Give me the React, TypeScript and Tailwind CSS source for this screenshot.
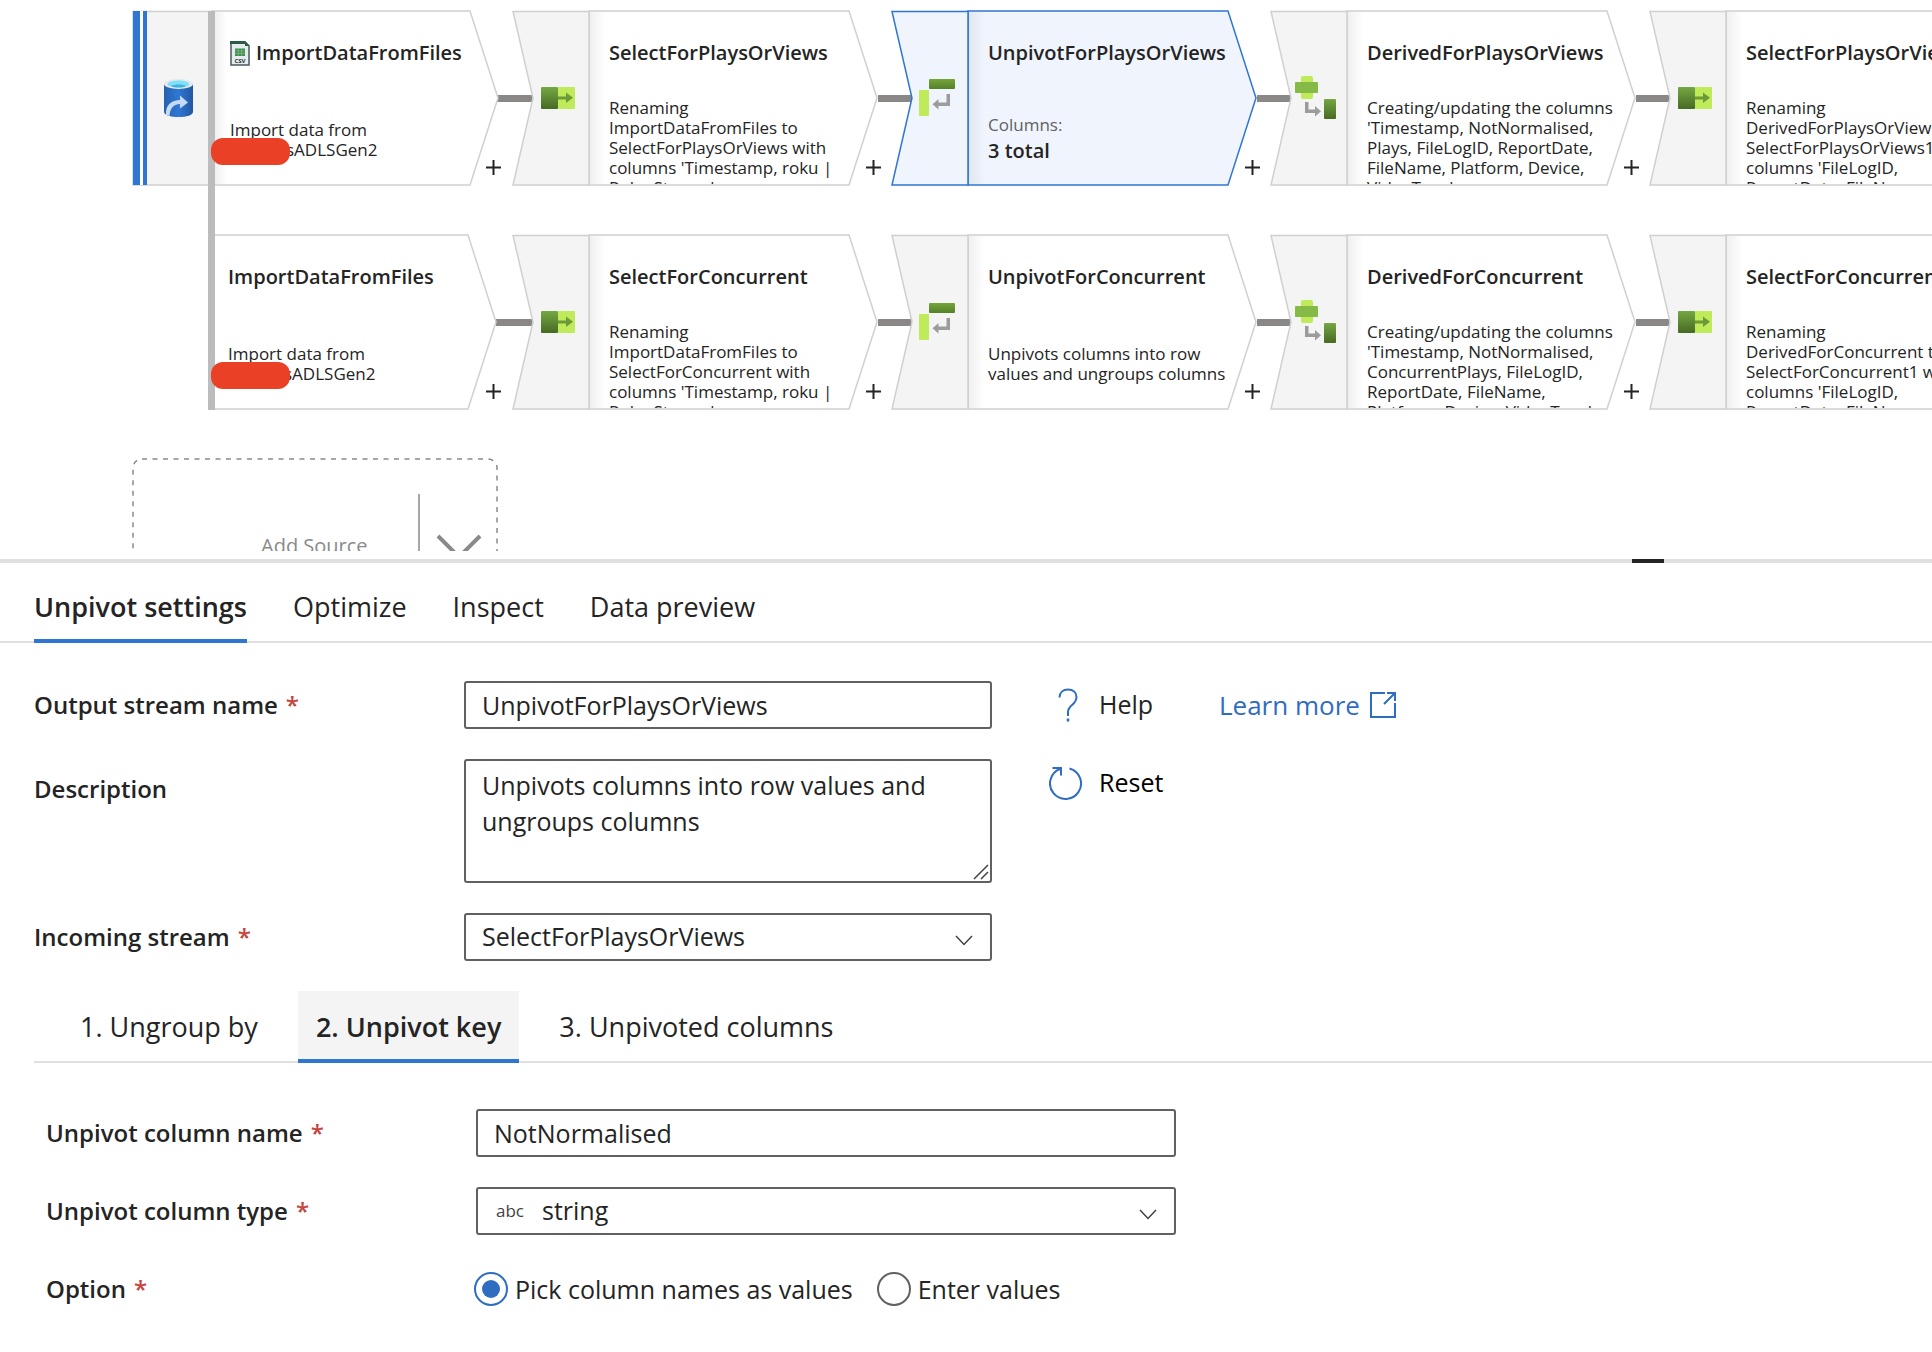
import { useState, type ReactNode } from 'react';

type Kind = 'select' | 'unpivot' | 'derive';

type StreamNode = {
  kind: Kind;
  title: string;
  lines?: string[];
  total?: number;
  selected?: boolean;
};

const playsNodes: StreamNode[] = [
  {
    kind: 'select',
    title: 'SelectForPlaysOrViews',
    lines: ['Renaming', 'ImportDataFromFiles to', 'SelectForPlaysOrViews with', "columns 'Timestamp, roku |", "Roku Stream'"],
  },
  { kind: 'unpivot', title: 'UnpivotForPlaysOrViews', total: 3, selected: true },
  {
    kind: 'derive',
    title: 'DerivedForPlaysOrViews',
    lines: ['Creating/updating the columns', "'Timestamp, NotNormalised,", 'Plays, FileLogID, ReportDate,', 'FileName, Platform, Device,', "VideoType'"],
  },
  {
    kind: 'select',
    title: 'SelectForPlaysOrViews1',
    lines: ['Renaming', 'DerivedForPlaysOrViews to', 'SelectForPlaysOrViews1 with', "columns 'FileLogID,", 'ReportDate, FileName,'],
  },
];

const concurrentNodes: StreamNode[] = [
  {
    kind: 'select',
    title: 'SelectForConcurrent',
    lines: ['Renaming', 'ImportDataFromFiles to', 'SelectForConcurrent with', "columns 'Timestamp, roku |", "Roku Stream'"],
  },
  {
    kind: 'unpivot',
    title: 'UnpivotForConcurrent',
    lines: ['Unpivots columns into row', 'values and ungroups columns'],
  },
  {
    kind: 'derive',
    title: 'DerivedForConcurrent',
    lines: ['Creating/updating the columns', "'Timestamp, NotNormalised,", 'ConcurrentPlays, FileLogID,', 'ReportDate, FileName,', "Platform, Device, VideoType'"],
  },
  {
    kind: 'select',
    title: 'SelectForConcurrent1',
    lines: ['Renaming', 'DerivedForConcurrent to', 'SelectForConcurrent1 with', "columns 'FileLogID,", 'ReportDate, FileName,'],
  },
];

const mainTabs = ['Unpivot settings', 'Optimize', 'Inspect', 'Data preview'];
const stepTabs = ['1. Ungroup by', '2. Unpivot key', '3. Unpivoted columns'];

const fieldClass =
  'w-full h-12 rounded-[3px] border-2 border-[#616161] bg-white px-4 text-[25px] text-[#242424] outline-none';

function Gradients() {
  return (
    <svg width="0" height="0" className="absolute">
      <defs>
        <linearGradient id="leaf" x1="0" y1="0" x2="0" y2="1">
          <stop offset="0" stopColor="#76a742" />
          <stop offset="1" stopColor="#466a23" />
        </linearGradient>
        <linearGradient id="bar" x1="0" y1="0" x2="0" y2="1">
          <stop offset="0" stopColor="#76a53a" />
          <stop offset="1" stopColor="#54812a" />
        </linearGradient>
        <linearGradient id="shade" x1="0" y1="0" x2="1" y2="0">
          <stop offset="0" stopColor="#000" stopOpacity="0.06" />
          <stop offset="1" stopColor="#000" stopOpacity="0" />
        </linearGradient>
        <linearGradient id="bucket" x1="0" y1="0" x2="1" y2="0">
          <stop offset="0" stopColor="#2660ae" />
          <stop offset="0.5" stopColor="#2f78d4" />
          <stop offset="1" stopColor="#2357a0" />
        </linearGradient>
      </defs>
    </svg>
  );
}

function KindIcon({ kind }: { kind: Kind }) {
  if (kind === 'select') {
    return (
      <g>
        <rect x="29" y="77" width="17" height="22" rx="1" fill="url(#leaf)" />
        <rect x="46" y="77" width="17" height="22" rx="1" fill="#bfea59" />
        <path d="M46 86.500h8v-4l7 5.200-7 5.200v-3.400h-8z" fill="#6b9a36" />
      </g>
    );
  }
  if (kind === 'unpivot') {
    return (
      <g>
        <rect x="38" y="69" width="26" height="10" rx="1" fill="url(#bar)" />
        <rect x="28" y="80" width="10" height="26" rx="1" fill="#bfea59" />
        <path d="M59 84h-3.500v8.500h-8v-3.500l-6 5.300 6 5.300v-3.500h11.500z" fill="#9c9c9c" />
      </g>
    );
  }
  return (
    <g>
      <rect x="31" y="66" width="12" height="23" rx="2" fill="#bfea59" />
      <rect x="25" y="72" width="23" height="11" rx="1" fill="#86ba46" />
      <path d="M35 92h3.500v7.500h6.500v-3.500l6 5.300-6 5.300v-3.500h-10z" fill="#9c9c9c" />
      <rect x="54" y="89" width="12" height="20" rx="1" fill="url(#leaf)" />
    </g>
  );
}

function PlusButton() {
  return (
    <button aria-label="Add transformation" className="absolute left-[352px] top-[148px] p-0.5">
      <svg width="15" height="15" viewBox="0 0 15 15" stroke="#242424" strokeWidth="2">
        <path d="M7.500 0v15M0 7.500h15" />
      </svg>
    </button>
  );
}

function TransformNode({ node }: { node: StreamNode }) {
  const stroke = node.selected ? '#2f76d2' : '#d0d0d0';
  const lines = node.lines || [];
  return (
    <div className="relative h-[176px] w-[379px] shrink-0">
      <svg width="402" height="176" viewBox="0 0 402 176" className="absolute left-0 top-0">
        <path d="M366 88.500H400" stroke="#8a8886" strokeWidth="7" />
        <path d="M77 1H337L365 88 337 175H77z" fill={node.selected ? '#f0f5fd' : '#fff'} stroke={stroke} strokeWidth="1.500" />
        <rect x="78" y="2" width="16" height="172" fill="url(#shade)" />
        <path d="M1 1.500H77V175H1L21 88z" fill={node.selected ? '#f0f5fd' : '#f4f4f4'} stroke={stroke} strokeWidth="1.500" />
        <KindIcon kind={node.kind} />
      </svg>
      <div className="relative h-[174px] overflow-hidden pl-[97px] pt-[29px] whitespace-nowrap">
        <h3 className="text-[20px] leading-7 font-semibold">{node.title}</h3>
        {node.total ? (
          <div className="pt-12">
            <p className="text-[17px] leading-5 text-[#616161]">Columns:</p>
            <p className="pt-0.5 text-[20px] leading-7 font-semibold">{node.total} total</p>
          </div>
        ) : (
          <div className={lines.length > 2 ? 'pt-[31px]' : 'pt-[53px]'}>
            {lines.map(line => (
              <p key={line} className="text-[17px] leading-5">{line}</p>
            ))}
          </div>
        )}
      </div>
      <PlusButton />
    </div>
  );
}

function CsvIcon() {
  return (
    <svg width="20" height="25" viewBox="0 0 20 25">
      <path d="M1 1h14l4 4v19H1z" fill="#e6ebee" stroke="#4a5962" strokeWidth="1.500" />
      <path d="M0 0h15l5 5h-5V3H0z" fill="#2d5a48" />
      <path d="M5 7.500h10v7.500H5z" fill="#3f8f50" />
      <path d="M5 10h10M5 12.500h10M8.300 7v8M11.600 7v8" stroke="#8fc096" strokeWidth="0.600" />
      <text x="10" y="22" textAnchor="middle" fontSize="6" fontWeight="700" fill="#26343c">CSV</text>
    </svg>
  );
}

function SourceNode({ primary = false }: { primary?: boolean }) {
  return (
    <div className="relative h-[176px] w-[380px] shrink-0">
      <svg width="402" height="176" viewBox="0 0 402 176" className="absolute left-0 top-0">
        <path d="M364 88.500H401" stroke="#8a8886" strokeWidth="7" />
        <path
          d={primary ? 'M80 1H338L366 88 338 175H80z' : 'M80 1H336L364 88 336 175H80z'}
          fill="#fff"
          stroke="#d0d0d0"
          strokeWidth="1.500"
        />
        {primary && (
          <g>
            <rect x="83" y="2" width="12" height="172" fill="url(#shade)" />
            <path d="M1 1.500H80V175H1z" fill="#f4f4f4" stroke="#d0d0d0" strokeWidth="1.500" />
            <path d="M8 1h3v174H8z" fill="#fff" />
            <path d="M1 1h7v174H1zM11 1h4v174H11z" fill="#2f76d2" />
            <path d="M32 74v28c0 3 6.500 5 14.500 5s14.500-2 14.500-5V74z" fill="url(#bucket)" />
            <ellipse cx="46.500" cy="74" rx="14.500" ry="5" fill="#e6e8ea" />
            <ellipse cx="46.500" cy="74" rx="11" ry="3.600" fill="#7fe0fb" />
            <path d="M39 76c3-2 12-2 15 0-3 2-12 2-15 0z" fill="#3fb4d6" />
            <path d="M34 105c-1-10 6-15 14-15v-4.500l8 7-8 6v-4.500c-6 0-10 4-10.500 12z" fill="#c5dbf3" />
          </g>
        )}
      </svg>
      <div className={`relative pt-[29px] whitespace-nowrap ${primary ? 'pl-[98px]' : 'pl-24'}`}>
        <h3 className="flex items-center gap-1.5 text-[20px] leading-7 font-semibold">
          {primary && <CsvIcon />}
          ImportDataFromFiles
        </h3>
        <p className="pt-[53px] text-[17px] leading-5">Import data from</p>
        <p className="pl-14 text-[17px] leading-5">sADLSGen2</p>
      </div>
      {primary && <div className="absolute left-[76px] top-px z-10 h-[399px] w-[7px] bg-[#bcbcbc]" />}
      <div className="absolute left-[79px] top-[128px] z-20 h-[27px] w-[79px] rounded-[12px] bg-[#ea4126]" />
      <PlusButton />
    </div>
  );
}

function AddSource() {
  return (
    <button className="relative flex h-[176px] w-[366px] shrink-0 items-center text-[20px] text-[#8a8a8a]">
      <svg width="366" height="176" viewBox="0 0 366 176" className="absolute left-0 top-0" fill="none" stroke="#8a8a8a">
        <rect x="1" y="1" width="364" height="174" rx="9" strokeWidth="1.500" strokeDasharray="5 5.500" />
        <path d="M287 36V140" strokeWidth="1.500" />
        <path d="M306 78l21 21 21-21" strokeWidth="4" />
      </svg>
      <span className="pl-[129px]">Add Source</span>
    </button>
  );
}

function Label({ htmlFor, required = true, children }: { htmlFor?: string; required?: boolean; children: ReactNode }) {
  return (
    <label htmlFor={htmlFor} className="flex w-[430px] shrink-0 items-center gap-2 text-[24px] leading-8 font-semibold">
      {children}
      {required && <span className="text-[#c4443e]">*</span>}
    </label>
  );
}

function Chevron() {
  return (
    <svg
      width="18"
      height="11"
      viewBox="0 0 18 11"
      fill="none"
      stroke="#424242"
      strokeWidth="1.500"
      className="pointer-events-none absolute right-[19px] top-[22px]"
    >
      <path d="M1 1l8 8.500L17 1" />
    </svg>
  );
}

export default function App() {
  const [mainTab, setMainTab] = useState(mainTabs[0]);
  const [step, setStep] = useState(stepTabs[1]);
  const [streamName, setStreamName] = useState('UnpivotForPlaysOrViews');
  const [description, setDescription] = useState('Unpivots columns into row values and ungroups columns');
  const [columnName, setColumnName] = useState('NotNormalised');
  const [option, setOption] = useState('pick');

  return (
    <div className="min-h-screen overflow-hidden bg-white font-['Open_Sans','Noto_Sans',sans-serif] text-[#242424]">
      <Gradients />

      <section aria-label="Data flow" className="h-[551px] overflow-hidden pl-[132px] pt-2.5">
        <div className="flex flex-col gap-12">
          <div className="flex">
            <SourceNode primary />
            {playsNodes.map(n => <TransformNode key={n.title} node={n} />)}
          </div>
          <div className="flex">
            <SourceNode />
            {concurrentNodes.map(n => <TransformNode key={n.title} node={n} />)}
          </div>
          <AddSource />
        </div>
      </section>

      <div className="mt-2 flex h-1 justify-end bg-[#e0e0e0] pr-[268px]">
        <div className="w-8 bg-[#242424]" />
      </div>

      <nav className="flex h-20 gap-[46px] border-b-2 border-[#e0e0e0] pl-[34px]">
        {mainTabs.map(tab => (
          <button
            key={tab}
            onClick={() => setMainTab(tab)}
            className={`-mb-0.5 border-b-4 pt-3 text-[27px] ${tab === mainTab ? 'border-[#2f76d2] font-semibold' : 'border-transparent'}`}
          >
            {tab}
          </button>
        ))}
      </nav>

      <main className="pl-[34px]">
        <div className="flex flex-col gap-[30px] pt-[38px]">
          <div className="flex items-center">
            <Label htmlFor="stream-name">Output stream name</Label>
            <div className="w-[528px]">
              <input id="stream-name" value={streamName} onChange={e => setStreamName(e.target.value)} className={fieldClass} />
            </div>
            <button className="ml-[57px] flex w-[170px] items-center gap-3 text-[25px]">
              <svg width="38" height="34" viewBox="0 0 38 34" fill="none" stroke="#2f6dc0" strokeWidth="2">
                <path d="M10.500 9.500c0-5 3.500-8 8.500-8s8.500 3 8.500 7.500c0 8-8.500 8-8.500 15V28" />
                <path d="M19 30.500v3" strokeWidth="2.500" />
              </svg>
              Help
            </button>
            <a href="#learn-more" className="flex items-center gap-2.5 text-[26px] text-[#2f6dc0]">
              Learn more
              <svg width="26" height="26" viewBox="0 0 26 26" fill="none" stroke="currentColor" strokeWidth="2">
                <path d="M15 1H1v24h24V11" />
                <path d="M17 1h8v8M25 1L14 12" />
              </svg>
            </a>
          </div>

          <div className="flex items-start">
            <div className="pt-[14px]">
              <Label htmlFor="description" required={false}>Description</Label>
            </div>
            <div className="relative flex w-[528px]">
              <textarea
                id="description"
                value={description}
                onChange={e => setDescription(e.target.value)}
                className="h-[124px] w-full resize-none rounded-[3px] border-2 border-[#616161] bg-white px-4 pt-1.5 text-[25px] leading-9 outline-none"
              />
              <svg width="16" height="16" viewBox="0 0 16 16" className="pointer-events-none absolute bottom-[3px] right-[3px]" stroke="#424242" strokeWidth="1.500">
                <path d="M1 15L15 1M8 15l7-7" />
              </svg>
            </div>
            <button className="ml-[57px] flex h-12 items-center gap-3 text-[25px] text-black">
              <svg width="38" height="34" viewBox="0 0 38 34" fill="none" stroke="#2f6dc0" strokeWidth="2">
                <path d="M20.500 2.500A15.500 15.500 0 1 1 11 3" />
                <path d="M3.500 2h8.500v7.500" />
              </svg>
              Reset
            </button>
          </div>

          <div className="flex items-center">
            <Label htmlFor="incoming">Incoming stream</Label>
            <div className="relative w-[528px]">
              <select id="incoming" className={`${fieldClass} appearance-none`}>
                <option>SelectForPlaysOrViews</option>
                <option>SelectForConcurrent</option>
              </select>
              <Chevron />
            </div>
          </div>

          <div className="flex h-[72px] gap-[22px] border-b-2 border-[#e0e0e0] pl-7">
            {stepTabs.map(tab => (
              <button
                key={tab}
                onClick={() => setStep(tab)}
                className={`-mb-0.5 border-b-4 px-[18px] pt-1 text-[27px] ${tab === step ? 'border-[#2f76d2] bg-[#f4f4f4] font-semibold' : 'border-transparent'}`}
              >
                {tab}
              </button>
            ))}
          </div>
        </div>

        <div className="flex flex-col gap-[30px] pl-3 pt-[46px]">
          <div className="flex items-center">
            <Label htmlFor="column-name">Unpivot column name</Label>
            <div className="w-[700px]">
              <input id="column-name" value={columnName} onChange={e => setColumnName(e.target.value)} className={fieldClass} />
            </div>
          </div>

          <div className="flex items-center">
            <Label htmlFor="column-type">Unpivot column type</Label>
            <div className="relative w-[700px]">
              <select id="column-type" className={`${fieldClass} appearance-none pl-16`}>
                <option>string</option>
                <option>integer</option>
              </select>
              <span className="pointer-events-none absolute left-5 top-3 text-[17px] leading-6 text-[#424242]">abc</span>
              <Chevron />
            </div>
          </div>

          <div className="flex items-center pt-1.5">
            <Label>Option</Label>
            <div className="-ml-0.5 flex gap-6 text-[25px] leading-9">
              {[['pick', 'Pick column names as values'], ['enter', 'Enter values']].map(([value, text]) => (
                <label key={value} className="flex items-center gap-[7px]">
                  <input
                    type="radio"
                    name="option"
                    checked={option === value}
                    onChange={() => setOption(value)}
                    className="size-[34px] appearance-none rounded-full border-2 border-[#616161] bg-clip-content p-1.5 checked:border-[#2f6dc0] checked:bg-[#2f6dc0]"
                  />
                  {text}
                </label>
              ))}
            </div>
          </div>
        </div>
      </main>
    </div>
  );
}
